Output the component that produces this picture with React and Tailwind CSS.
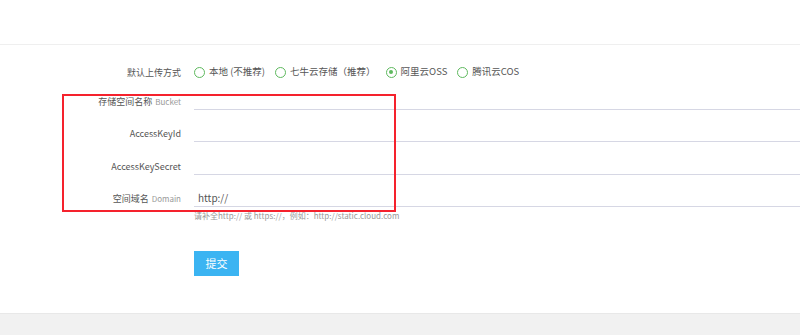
import React from "react";

const options = [
  { label: "本地 (不推荐)", checked: false },
  { label: "七牛云存储（推荐）", checked: false },
  { label: "阿里云OSS", checked: true },
  { label: "腾讯云COS", checked: false },
];

function Radio({ checked }) {
  return (
    <span className="flex h-[11px] w-[11px] shrink-0 items-center justify-center rounded-full border-[1.5px] border-[#5eb95e] bg-white">
      {checked && <span className="h-[4px] w-[4px] rounded-full bg-[#5eb95e]" />}
    </span>
  );
}

function Row({ label, sub, value, className = "" }) {
  return (
    <div className={"grid grid-cols-[181px_1fr] gap-x-[13px] items-center " + className}>
      <div className="text-right text-[9px] text-[#555] leading-none whitespace-nowrap">
        {label}
        {sub && <span className="ml-[3px] text-[8px] text-[#999]">{sub}</span>}
      </div>
      <div className="h-[18px] border-b border-[#d6d7e4] flex items-center pl-[4px] text-[10px] text-[#555] leading-none">
        {value}
      </div>
    </div>
  );
}

export default function App() {
  return (
    <div
      className="relative h-[335px] w-[800px] overflow-hidden bg-white"
      style={{ fontFamily: '"Noto Sans CJK SC", "Noto Sans", sans-serif' }}
    >
      <div className="h-[45px] border-b border-[#efefef]" />

      <div className="pt-[18px]">
        <div className="grid grid-cols-[181px_1fr] gap-x-[13px] items-center h-[18px]">
          <div className="text-right text-[9px] text-[#555] leading-none">默认上传方式</div>
          <div className="flex items-center text-[9.5px] text-[#555] leading-none">
            {options.map((o) => (
              <label key={o.label} className="flex items-center gap-[4px] mr-[10px]">
                <Radio checked={o.checked} />
                <span>{o.label}</span>
              </label>
            ))}
          </div>
        </div>

        <Row label="存储空间名称" sub="Bucket" className="mt-[11px]" />
        <Row label="AccessKeyId" className="mt-[14px]" />
        <Row label="AccessKeySecret" className="mt-[15px]" />
        <Row label="空间域名" sub="Domain" value="http://" className="mt-[14px]" />

        <div className="ml-[194px] mt-[4px] text-[8px] leading-[10px] text-[#999]">
          请补全http:// 或 https://，例如：http://static.cloud.com
        </div>

        <div className="ml-[194px] mt-[28px]">
          <button className="h-[25px] w-[45px] bg-[#3bb4f2] text-[11px] text-white leading-none">
            提交
          </button>
        </div>
      </div>

      <div className="absolute bottom-0 left-0 h-[22px] w-full border-t border-[#e8e8e8] bg-[#f1f1f1]" />

      <div className="pointer-events-none absolute left-[62px] top-[94px] h-[118px] w-[334px] border-2 border-[#f5222d]" />
    </div>
  );
}
